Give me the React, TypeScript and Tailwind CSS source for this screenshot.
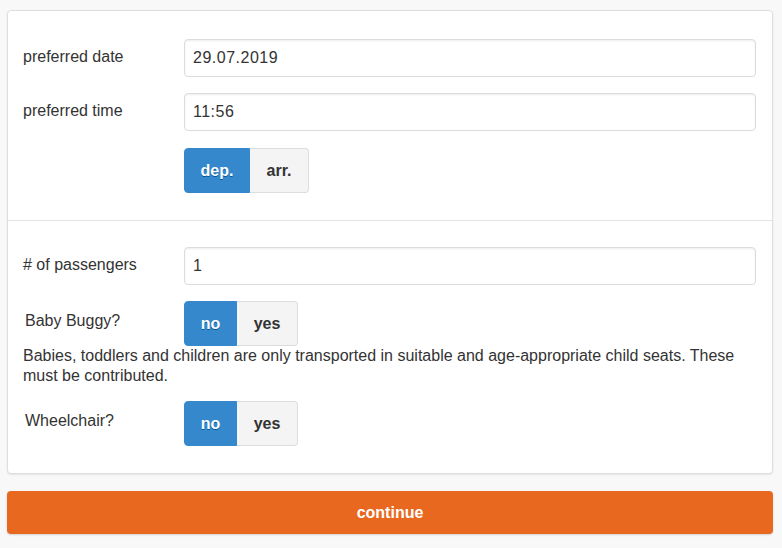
import { useState } from "react";

type ToggleProps = {
  options: string[];
  widths: string[];
};

function Toggle({ options, widths }: ToggleProps) {
  const [active, setActive] = useState(0);
  return (
    <div className="flex h-[45px]">
      {options.map((o, i) => (
        <button
          key={o}
          onClick={() => setActive(i)}
          className={
            (i === 0 ? "rounded-l-[4px] " : "rounded-r-[4px] ") +
            (active === i
              ? "bg-[#3588cc] text-white border border-[#3588cc] [text-shadow:0_1px_0_#005599] "
              : "bg-[#f4f4f4] text-[#333] border border-[#dddddd] [text-shadow:0_1px_0_#f3f3f3] ") +
            (i === 1 ? "border-l-0 " : "") +
            widths[i] +
            " font-bold text-[16px] flex items-center justify-center"
          }
        >
          {o}
        </button>
      ))}
    </div>
  );
}

function Field({ label, value }: { label: string; value: string }) {
  return (
    <div className="flex items-start">
      <label className="w-[176px] pl-[15px] pt-[6px] text-[#333]">{label}</label>
      <input
        defaultValue={value}
        className="flex-1 h-[38px] px-[8px] border border-[#dcdcdc] rounded-[4px] text-[#333] tracking-[0.5px] shadow-[inset_0_1px_2px_rgba(0,0,0,0.08)] outline-none"
      />
    </div>
  );
}

export default function App() {
  return (
    <div className="min-h-[548px] bg-[#f8f8f8] pl-[7px] pr-[9px] pt-[10px] font-['Liberation_Sans',Arial,sans-serif] text-[16px] text-[#333]">
      <div className="bg-white border border-[#dedede] rounded-[4px] shadow-[0_1px_2px_rgba(0,0,0,0.08)] pr-[16px]">
        <div className="pt-[28px] pb-[27px] flex flex-col gap-[16px]">
          <Field label="preferred date" value="29.07.2019" />
          <Field label="preferred time" value="11:56" />
          <div className="pl-[176px] pt-[1px]">
            <Toggle options={["dep.", "arr."]} widths={["w-[66px]", "w-[59px]"]} />
          </div>
        </div>
        <div className="border-t border-[#e2e2e2] -mr-[16px]" />
        <div className="pt-[26px] pb-[27px] flex flex-col">
          <Field label="# of passengers" value="1" />
          <div className="flex items-start mt-[16px]">
            <span className="w-[176px] pl-[17px] pt-[8px]">Baby Buggy?</span>
            <Toggle options={["no", "yes"]} widths={["w-[53px]", "w-[61px]"]} />
          </div>
          <p className="pl-[15px] leading-[20px] pr-[4px]">
            Babies, toddlers and children are only transported in suitable and age-appropriate child seats. These must be contributed.
          </p>
          <div className="flex items-start mt-[15px]">
            <span className="w-[176px] pl-[17px] pt-[8px]">Wheelchair?</span>
            <Toggle options={["no", "yes"]} widths={["w-[53px]", "w-[61px]"]} />
          </div>
        </div>
      </div>
      <button className="mt-[17px] w-full h-[43px] bg-[#e8681f] text-white font-bold rounded-[4px] shadow-[0_1px_2px_rgba(0,0,0,0.15)]">
        continue
      </button>
    </div>
  );
}
